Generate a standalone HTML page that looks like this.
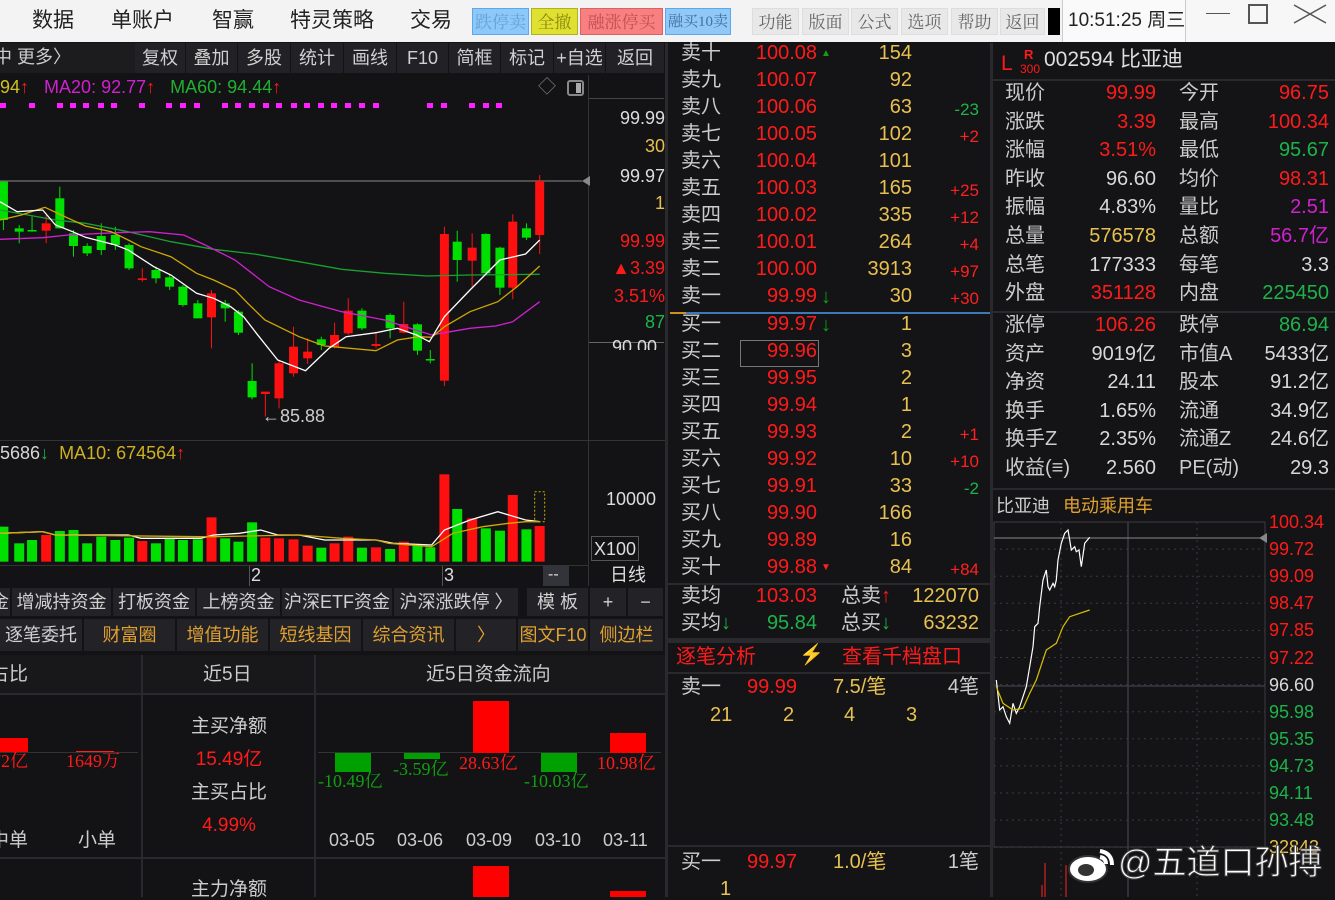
<!DOCTYPE html>
<html><head><meta charset="utf-8">
<style>
*{margin:0;padding:0;box-sizing:border-box}
body{width:1335px;height:897px;overflow:hidden;background:#131315;font-family:"Liberation Sans","Noto Sans CJK SC",sans-serif;position:relative;color:#ccc}
.a{position:absolute;white-space:nowrap;line-height:1}
.r{text-align:right}
.c{text-align:center}
.red{color:#ff1a1a}.grn{color:#1db34a}.yel{color:#e8c050}.wht{color:#d8d8d8}.mag{color:#d020d0}.org{color:#e0a030}
.tb{position:absolute;top:43px;height:30px;background:#222226;border-right:1px solid #131315;color:#d0d0d0;font-size:18px;line-height:30px;text-align:center}
.mb{position:absolute;top:8px;height:27px;font-family:"Liberation Serif","Noto Serif CJK SC",serif;font-size:17px;line-height:27px;text-align:center;color:#666;background:#e8e8e8;border:1px solid #ddd;overflow:hidden}
.t1{position:absolute;top:588px;height:28px;background:#232327;color:#d0d0d0;font-size:18px;line-height:28px;text-align:center;border-right:2px solid #131315}
.t2{position:absolute;top:619px;height:32px;background:#232327;color:#e0a030;font-size:18px;line-height:32px;text-align:center;border-right:2px solid #131315}
.ob{font-size:20px}
</style></head><body>

<div class="a" style="left:0;top:0;width:1335px;height:42px;background:#f3f3f3"></div>
<div class="a" style="left:1105px;top:0;width:230px;height:42px;background:#f7f7f7"></div>
<div class="a" style="left:32px;top:10px;font-size:21px;color:#222">数据</div>
<div class="a" style="left:111px;top:10px;font-size:21px;color:#222">单账户</div>
<div class="a" style="left:212px;top:10px;font-size:21px;color:#222">智赢</div>
<div class="a" style="left:290px;top:10px;font-size:21px;color:#222">特灵策略</div>
<div class="a" style="left:410px;top:10px;font-size:21px;color:#222">交易</div>
<div class="mb" style="left:472px;width:57px;background:#8cc8f8;color:#6aa0d8;border-color:#5aa8f0">跌停卖</div>
<div class="mb" style="left:531px;width:47px;background:#e0e030;color:#8a8a10;border-color:#b0b020">全撤</div>
<div class="mb" style="left:580px;width:83px;background:#f88080;color:#c05050;border-color:#e06060">融涨停买</div>
<div class="mb" style="left:665px;width:66px;background:#90c8f8;color:#4070a0;border-color:#5aa8f0;font-size:15px">融买10卖</div>
<div class="mb" style="left:752px;width:47px">功能</div>
<div class="mb" style="left:802px;width:47px">版面</div>
<div class="mb" style="left:851px;width:47px">公式</div>
<div class="mb" style="left:901px;width:47px">选项</div>
<div class="mb" style="left:951px;width:47px">帮助</div>
<div class="mb" style="left:1000px;width:45px">返回</div>
<div class="a" style="left:1048px;top:8px;width:12px;height:27px;background:#000"></div>
<div class="a" style="left:1062px;top:0;width:124px;height:42px;border-left:1px solid #ccc;border-right:1px solid #ccc;background:#fafafa"></div>
<div class="a" style="left:1068px;top:11px;font-size:19px;color:#222">10:51:25 周三</div>
<div class="a" style="left:1206px;top:13px;width:24px;height:1px;background:#555"></div>
<div class="a" style="left:1248px;top:4px;width:20px;height:20px;border:2px solid #555"></div>
<svg class="a" style="left:1292px;top:3px" width="36" height="22"><path d="M2 2L34 20M34 2L2 20" stroke="#555" stroke-width="1.5"/></svg>

<div class="a" style="left:0;top:43px;width:665px;height:30px;background:#1c1c1e"></div>
<div class="a" style="left:-6px;top:48px;font-size:18px;color:#ccc">中 更多〉</div>
<div class="tb" style="left:135px;width:51px">复权</div>
<div class="tb" style="left:186px;width:52px">叠加</div>
<div class="tb" style="left:238px;width:53px">多股</div>
<div class="tb" style="left:291px;width:53px">统计</div>
<div class="tb" style="left:344px;width:53px">画线</div>
<div class="tb" style="left:397px;width:52px">F10</div>
<div class="tb" style="left:449px;width:52px">简框</div>
<div class="tb" style="left:501px;width:53px">标记</div>
<div class="tb" style="left:554px;width:52px">+自选</div>
<div class="tb" style="left:606px;width:59px">返回</div>

<div class="a" style="left:0;top:78px;font-size:18px"><span style="color:#d0c020">94</span><span class="red">↑</span> <span class="mag">&nbsp;&nbsp;MA20: 92.77</span><span class="red">↑</span> <span style="color:#20b030">&nbsp;&nbsp;MA60: 94.44</span><span class="red">↑</span></div>
<div class="a" style="left:538px;top:78px;font-size:18px;color:#777">◇</div>
<div class="a" style="left:567px;top:80px;width:17px;height:16px;border:2px solid #888;border-radius:3px"><div style="position:absolute;right:1px;top:1px;width:5px;height:10px;background:#aaa"></div></div>
<svg class="a" style="left:0;top:103px" width="520" height="8" fill="#ff20ff">
<g id="d"><rect x="0" y="0" width="6" height="5"/></g>
<use href="#d" x="0"/><use href="#d" x="29"/><use href="#d" x="57"/><use href="#d" x="70"/><use href="#d" x="83"/><use href="#d" x="98"/><use href="#d" x="111"/><use href="#d" x="139"/><use href="#d" x="166"/><use href="#d" x="180"/><use href="#d" x="194"/><use href="#d" x="222"/><use href="#d" x="235"/><use href="#d" x="249"/><use href="#d" x="263"/><use href="#d" x="276"/><use href="#d" x="291"/><use href="#d" x="304"/><use href="#d" x="318"/><use href="#d" x="331"/><use href="#d" x="345"/><use href="#d" x="359"/><use href="#d" x="373"/><use href="#d" x="427"/><use href="#d" x="441"/><use href="#d" x="469"/><use href="#d" x="483"/><use href="#d" x="496"/>
</svg>

<div class="a" style="left:588px;top:75px;width:1px;height:513px;background:#333"></div>
<div class="a" style="left:665px;top:43px;width:3px;height:854px;background:#2a2a2e"></div>
<div class="a" style="left:589px;top:98px;width:75px;height:1px;background:#444"></div>
<div class="a" style="left:589px;top:342px;width:75px;height:1px;background:#666"></div>
<div class="a r" style="left:590px;top:109px;width:75px;font-size:18px;color:#ddd">99.99</div>
<div class="a r" style="left:590px;top:137px;width:75px;font-size:18px" ><span class="yel">30</span></div>
<div class="a r" style="left:590px;top:167px;width:75px;font-size:18px;color:#ddd">99.97</div>
<div class="a r" style="left:590px;top:194px;width:75px;font-size:18px"><span class="yel">1</span></div>
<div class="a r red" style="left:590px;top:232px;width:75px;font-size:18px">99.99</div>
<div class="a r red" style="left:590px;top:259px;width:75px;font-size:18px">▲3.39</div>
<div class="a r red" style="left:590px;top:287px;width:75px;font-size:18px">3.51%</div>
<div class="a r grn" style="left:590px;top:313px;width:75px;font-size:18px">87</div>
<div class="a" style="left:612px;top:338px;font-size:18px;color:#ddd;height:12px;overflow:hidden">90.00</div>
<div class="a" style="left:589px;top:440px;width:76px;height:1px;background:#333"></div>
<div class="a" style="left:0;top:440px;width:588px;height:1px;background:#333"></div>
<div class="a" style="left:606px;top:490px;font-size:18px;color:#ddd">10000</div>
<div class="a" style="left:591px;top:536px;width:48px;height:25px;border:1px solid #555;font-size:18px;color:#ddd;padding:3px 2px">X100</div>
<div class="a" style="left:610px;top:566px;font-size:18px;color:#ddd">日线</div>
<div class="a" style="left:0;top:565px;width:588px;height:1px;background:#333"></div>
<div class="a" style="left:543px;top:565px;width:26px;height:22px;background:#33333a;color:#ddd;font-size:16px;padding:2px 5px">--</div>
<div class="a" style="left:251px;top:566px;font-size:18px;color:#ddd">2</div>
<div class="a" style="left:444px;top:566px;font-size:18px;color:#ddd">3</div>
<div class="a" style="left:249px;top:566px;width:1px;height:20px;background:#555"></div>
<div class="a" style="left:442px;top:566px;width:1px;height:20px;background:#555"></div>

<svg class="a" style="left:0;top:0" width="665" height="588">
<line x1="0" y1="181" x2="582" y2="181" stroke="#888" stroke-width="1"/>
<polygon points="582,181 590,176 590,186" fill="#888"/>
</svg>
<svg class="a" style="left:0;top:0" width="665" height="588" id="ks"></svg>
<div class="a" style="left:262px;top:407px;font-size:18px;color:#ccc">←85.88</div>

<div class="a" style="left:0;top:444px;font-size:18px"><span class="wht">5686</span><span class="grn">↓</span> <span style="color:#d0b020">&nbsp;MA10: 674564</span><span class="red">↑</span></div>

<div class="a" style="left:0;top:586px;width:665px;height:68px;background:#131315"></div>
<div class="t1" style="left:-10px;width:22px">金</div>
<div class="t1" style="left:12px;width:101px">增减持资金</div>
<div class="t1" style="left:113px;width:84px">打板资金</div>
<div class="t1" style="left:197px;width:85px">上榜资金</div>
<div class="t1" style="left:282px;width:112px">沪深ETF资金</div>
<div class="t1" style="left:394px;width:126px">沪深涨跌停 〉</div>
<div class="t1" style="left:527px;width:63px">模 板</div>
<div class="t1" style="left:590px;width:38px">+</div>
<div class="t1" style="left:628px;width:37px">−</div>
<div class="t2" style="left:0;width:84px;color:#d0d0d0">逐笔委托</div>
<div class="t2" style="left:84px;width:93px">财富圈</div>
<div class="t2" style="left:177px;width:93px">增值功能</div>
<div class="t2" style="left:270px;width:93px">短线基因</div>
<div class="t2" style="left:363px;width:93px">综合资讯</div>
<div class="t2" style="left:456px;width:62px">〉</div>
<div class="t2" style="left:518px;width:72px">图文F10</div>
<div class="t2" style="left:590px;width:75px">侧边栏</div>

<div class="a" style="left:0;top:655px;width:665px;height:39px;background:#18181a"></div>
<div class="a" style="left:0;top:693px;width:665px;height:2px;background:#2a2a2e"></div>
<div class="a" style="left:0;top:857px;width:665px;height:2px;background:#2a2a2e"></div>
<div class="a" style="left:141px;top:655px;width:2px;height:242px;background:#2a2a2e"></div>
<div class="a" style="left:314px;top:655px;width:2px;height:242px;background:#2a2a2e"></div>
<div class="a" style="left:-10px;top:665px;font-size:19px;color:#ccc">占比</div>
<div class="a" style="left:203px;top:665px;font-size:19px;color:#ccc">近5日</div>
<div class="a" style="left:426px;top:665px;font-size:19px;color:#ccc">近5日资金流向</div>
<div class="a" style="left:0;top:738px;width:28px;height:15px;background:#ff0000"></div>
<div class="a" style="left:0;top:752px;width:138px;height:1px;background:#333"></div>
<div class="a" style="left:76px;top:751px;width:38px;height:1px;background:#ff2020"></div>
<div class="a red" style="left:-8px;top:752px;font-size:18px;font-family:'Liberation Serif','Noto Serif CJK SC',serif">72亿</div>
<div class="a red" style="left:66px;top:752px;font-size:18px;font-family:'Liberation Serif','Noto Serif CJK SC',serif">1649万</div>
<div class="a" style="left:-10px;top:831px;font-size:19px;color:#ccc">中单</div>
<div class="a" style="left:78px;top:831px;font-size:19px;color:#ccc">小单</div>
<div class="a c" style="left:143px;top:717px;width:172px;font-size:19px;color:#ccc">主买净额</div>
<div class="a c red" style="left:143px;top:750px;width:172px;font-size:19px">15.49亿</div>
<div class="a c" style="left:143px;top:783px;width:172px;font-size:19px;color:#ccc">主买占比</div>
<div class="a c red" style="left:143px;top:816px;width:172px;font-size:19px">4.99%</div>
<div class="a c" style="left:143px;top:880px;width:172px;font-size:19px;color:#ccc">主力净额</div>
<div class="a" style="left:318px;top:752px;width:343px;height:1px;background:#333"></div>
<div class="a" style="left:335px;top:753px;width:36px;height:19px;background:#00a000"></div>
<div class="a" style="left:404px;top:753px;width:36px;height:6px;background:#00a000"></div>
<div class="a" style="left:473px;top:701px;width:36px;height:52px;background:#ff0000"></div>
<div class="a" style="left:541px;top:753px;width:36px;height:19px;background:#00a000"></div>
<div class="a" style="left:610px;top:733px;width:36px;height:20px;background:#ff0000"></div>
<div class="a" style="left:318px;top:772px;font-size:18px;font-family:'Liberation Serif','Noto Serif CJK SC',serif;color:#10a010">-10.49亿</div>
<div class="a" style="left:393px;top:760px;font-size:18px;font-family:'Liberation Serif','Noto Serif CJK SC',serif;color:#10a010">-3.59亿</div>
<div class="a red" style="left:459px;top:754px;font-size:18px;font-family:'Liberation Serif','Noto Serif CJK SC',serif">28.63亿</div>
<div class="a" style="left:524px;top:772px;font-size:18px;font-family:'Liberation Serif','Noto Serif CJK SC',serif;color:#10a010">-10.03亿</div>
<div class="a red" style="left:597px;top:754px;font-size:18px;font-family:'Liberation Serif','Noto Serif CJK SC',serif">10.98亿</div>
<div class="a" style="left:329px;top:831px;font-size:18px;color:#ccc">03-05</div>
<div class="a" style="left:397px;top:831px;font-size:18px;color:#ccc">03-06</div>
<div class="a" style="left:466px;top:831px;font-size:18px;color:#ccc">03-09</div>
<div class="a" style="left:535px;top:831px;font-size:18px;color:#ccc">03-10</div>
<div class="a" style="left:603px;top:831px;font-size:18px;color:#ccc">03-11</div>
<div class="a" style="left:473px;top:866px;width:36px;height:31px;background:#ff0000"></div>
<div class="a" style="left:610px;top:891px;width:36px;height:6px;background:#ff0000"></div>

<div class="a" style="left:668px;top:43px;width:322px;height:854px;background:#141416"></div>
<div class="a" style="left:990px;top:43px;width:3px;height:854px;background:#2a2a2e"></div>
<div id="ob"></div>
<div class="a" style="left:670px;top:312px;width:320px;height:2px;background:#3a7ab8"></div>
<div class="a" style="left:670px;top:312px;width:16px;height:2px;background:#d09020"></div>
<div class="a" style="left:740px;top:340px;width:79px;height:27px;border:1px solid #777"></div>
<div class="a" style="left:668px;top:583px;width:322px;height:2px;background:#2a2a2e"></div>
<div class="a" style="left:668px;top:638px;width:322px;height:5px;background:#2a2a2e"></div>
<div class="a" style="left:668px;top:672px;width:322px;height:2px;background:#2a2a2e"></div>
<div class="a" style="left:668px;top:845px;width:322px;height:2px;background:#2a2a2e"></div>
<div class="a ob" style="left:681px;top:586px;color:#ccc">卖均</div>
<div class="a ob r red" style="left:740px;top:586px;width:77px">103.03</div>
<div class="a ob" style="left:841px;top:586px;color:#ccc">总卖<b class="red">↑</b></div>
<div class="a ob r yel" style="left:880px;top:586px;width:99px">122070</div>
<div class="a ob" style="left:681px;top:613px;color:#ccc">买均<b class="grn">↓</b></div>
<div class="a ob r grn" style="left:740px;top:613px;width:77px">95.84</div>
<div class="a ob" style="left:841px;top:613px;color:#ccc">总买<b class="grn">↓</b></div>
<div class="a ob r yel" style="left:880px;top:613px;width:99px">63232</div>
<div class="a ob red" style="left:676px;top:647px">逐笔分析</div>
<div class="a" style="left:799px;top:645px;font-size:20px;color:#8a7a30">⚡</div>
<div class="a ob red" style="left:842px;top:647px">查看千档盘口</div>
<div class="a ob" style="left:681px;top:677px;color:#ccc">卖一</div>
<div class="a ob red" style="left:747px;top:677px">99.99</div>
<div class="a ob yel" style="left:833px;top:677px">7.5/笔</div>
<div class="a ob r" style="left:920px;top:677px;width:59px;color:#ccc">4笔</div>
<div class="a ob yel" style="left:710px;top:705px">21</div>
<div class="a ob yel" style="left:783px;top:705px">2</div>
<div class="a ob yel" style="left:844px;top:705px">4</div>
<div class="a ob yel" style="left:906px;top:705px">3</div>
<div class="a ob" style="left:681px;top:852px;color:#ccc">买一</div>
<div class="a ob red" style="left:747px;top:852px">99.97</div>
<div class="a ob yel" style="left:833px;top:852px">1.0/笔</div>
<div class="a ob r" style="left:920px;top:852px;width:59px;color:#ccc">1笔</div>
<div class="a ob yel" style="left:720px;top:879px">1</div>

<div class="a" style="left:993px;top:43px;width:342px;height:854px;background:#141416"></div>
<div class="a red" style="left:1001px;top:53px;font-size:21px">L</div>
<div class="a red" style="left:1024px;top:48px;font-size:13px;font-weight:bold">R</div>
<div class="a red" style="left:1020px;top:63px;font-size:12px">300</div>
<div class="a" style="left:1044px;top:49px;font-size:21px;color:#ddd">002594 比亚迪</div>
<div class="a" style="left:993px;top:79px;width:342px;height:2px;background:#2a2a2e"></div>
<div class="a" style="left:993px;top:311px;width:342px;height:2px;background:#2a2a2e"></div>
<div id="qp"></div>
<div class="a" style="left:993px;top:488px;width:342px;height:2px;background:#2a2a2e"></div>
<div class="a" style="left:996px;top:497px;font-size:18px;color:#ccc">比亚迪</div>
<div class="a org" style="left:1063px;top:497px;font-size:18px">电动乘用车</div>
<svg class="a" style="left:993px;top:515px" width="342" height="382" id="ic"></svg>
<div id="ia"></div>

<svg class="a" style="left:1066px;top:845px" width="52" height="40">
<ellipse cx="22" cy="24" rx="19" ry="13" fill="#fff" stroke="#333" stroke-width="2"/>
<ellipse cx="20" cy="25" rx="8" ry="6" fill="#333"/>
<path d="M34 6 Q46 8 46 20 M34 12 Q40 13 40 19" stroke="#fff" stroke-width="4" fill="none"/>
</svg>
<div class="a" style="left:1118px;top:846px;font-size:34px;color:#fff;-webkit-text-stroke:1px #444">@五道口孙搏</div>

<script>
var C=[[8,65,180,65,210,'g'],[45,205,215,195,250,'g'],[75,210,214,170,215,'g'],[108,190,212,165,250,'r'],[140,115,205,80,205,'g'],[172,220,258,210,290,'g'],[204,258,280,250,288,'g'],[237,228,270,190,285,'g'],[270,225,255,200,270,'g'],[302,255,325,250,330,'g'],[333,355,360,325,365,'r'],[365,330,355,320,370,'g'],[397,352,380,345,390,'g'],[428,380,435,375,440,'g'],[463,430,475,420,475,'g'],[495,400,472,390,565,'r'],[527,430,445,420,485,'g'],[558,455,518,450,525,'g'],[590,663,712,610,718,'g'],[621,695,702,695,770,'r'],[653,610,715,600,745,'r'],[687,560,640,500,650,'r'],[720,575,595,535,612,'r'],[752,538,555,530,570,'g'],[783,525,560,488,565,'r'],[815,452,520,415,525,'r'],[847,452,505,445,510,'g'],[880,552,558,515,565,'r'],[913,465,505,460,535,'g'],[945,492,518,425,520,'r'],[977,493,572,490,585,'g'],[1007,597,600,570,610,'g'],[1040,222,662,200,678,'r'],[1070,245,300,212,365,'g'],[1105,263,302,220,380,'r'],[1137,222,340,220,345,'g'],[1170,263,383,260,405,'g'],[1200,185,383,163,418,'r'],[1232,205,233,190,240,'g'],[1263,63,225,45,282,'r']];
var V=[1100,1150,1140,1125,1113,1110,1150,1130,1140,1133,1143,1150,1133,1140,1138,1072,1135,1145,1087,1133,1135,1138,1157,1163,1150,1130,1163,1162,1167,1145,1155,1162,943,1047,1075,1105,1112,1005,1108,1098];
var sx=0.4273,sy=1/3;
function X(z){return (z*sx).toFixed(1)}function Y(z){return (160+z*sy).toFixed(1)}
var s='';
function pl(pts,col){var p=[];for(var i=0;i<pts.length;i+=2)p.push(X(pts[i])+','+Y(pts[i+1]));return '<polyline points="'+p.join(' ')+'" fill="none" stroke="'+col+'" stroke-width="1.3"/>';}
C.forEach(function(c,i){var col=c[5]=='g'?'#00e000':'#ff1010';var x=c[0]*sx;
s+='<line x1="'+x+'" x2="'+x+'" y1="'+Y(c[3])+'" y2="'+Y(c[4])+'" stroke="'+col+'"/>';
var t=160+c[1]*sy,b=160+c[2]*sy;s+='<rect x="'+(x-4.5)+'" y="'+t+'" width="9" height="'+Math.max(1.5,b-t)+'" fill="'+col+'"/>';
var vt=160+V[i]*sy,vb=160+1205*sy;s+='<rect x="'+(x-5)+'" y="'+vt+'" width="10" height="'+(vb-vt)+'" fill="'+col+'"/>';});
s+=pl([0,150,130,180,200,190,300,215,400,245,500,268,600,283,700,305,800,328,900,340,1000,348,1100,345,1263,343],'#18a030');
s+=pl([0,238,100,233,160,225,270,218,350,215,430,225,480,255,550,300,630,380,700,420,800,455,900,480,960,505,1010,525,1040,518,1100,505,1160,498,1200,485,1263,425],'#d020d0');
s+=pl([0,180,50,165,105,142,160,175,200,198,260,215,300,240,330,260,400,290,460,340,500,360,550,390,580,430,620,480,700,530,760,558,880,572,930,540,980,530,1010,532,1040,500,1100,455,1165,425,1210,380,1263,318],'#d0a800');
s+=pl([0,125,40,155,100,150,130,195,170,215,200,232,270,255,300,270,360,320,400,345,460,400,500,415,540,440,570,470,600,520,650,600,715,632,770,565,810,530,880,518,930,505,975,525,1005,545,1040,470,1100,390,1170,300,1230,282,1263,240],'#ffffff');
s+=pl([0,1120,100,1115,130,1125,300,1125,330,1135,470,1135,500,1125,560,1120,610,1110,650,1125,700,1125,760,1140,880,1140,920,1150,1010,1155,1040,1110,1100,1080,1165,1055,1230,1080,1263,1085],'#ffffff');
s+=pl([0,1120,100,1115,130,1125,470,1130,500,1130,700,1125,800,1135,880,1140,910,1150,1010,1160,1060,1120,1130,1100,1190,1090,1230,1085,1263,1085],'#d0a800');
s+='<rect x="'+(1263*sx-5)+'" y="'+Y(995)+'" width="10" height="'+(90*sy)+'" fill="none" stroke="#d0a800" stroke-dasharray="2,2"/>';
document.getElementById('ks').innerHTML=s;

var ob='';var S=[['卖十','100.08','154',''],['卖九','100.07','92',''],['卖八','100.06','63','-23'],['卖七','100.05','102','+2'],['卖六','100.04','101',''],['卖五','100.03','165','+25'],['卖四','100.02','335','+12'],['卖三','100.01','264','+4'],['卖二','100.00','3913','+97'],['卖一','99.99','30','+30'],
['买一','99.97','1',''],['买二','99.96','3',''],['买三','99.95','2',''],['买四','99.94','1',''],['买五','99.93','2','+1'],['买六','99.92','10','+10'],['买七','99.91','33','-2'],['买八','99.90','166',''],['买九','99.89','16',''],['买十','99.88','84','+84']];
S.forEach(function(r,i){var y=i<10?43+i*27:314+(i-10)*27;
ob+='<div class="a ob" style="left:681px;top:'+y+'px;color:#ccc">'+r[0]+'</div>';
ob+='<div class="a ob r red" style="left:740px;top:'+y+'px;width:77px">'+r[1]+'</div>';
var ic='';if(i==0)ic='▲';if(i==9||i==10)ic='↓';if(i==19)ic='▼';
if(ic)ob+='<div class="a" style="left:821px;top:'+(y+(ic=='↓'?1:6))+'px;font-weight:bold;font-size:'+(ic=='↓'?20:10)+'px;color:'+(i==19?'#ff2020':'#10a010')+'">'+ic+'</div>';
ob+='<div class="a ob r yel" style="left:850px;top:'+y+'px;width:62px">'+r[2]+'</div>';
if(r[3])ob+='<div class="a r" style="left:930px;top:'+(y+4)+'px;width:49px;font-size:17px;color:'+(r[3][0]=='-'?'#1db34a':'#ff2020')+'">'+r[3]+'</div>';});
document.getElementById('ob').innerHTML=ob;

var Q=[['现价','99.99','red','今开','96.75','red'],['涨跌','3.39','red','最高','100.34','red'],['涨幅','3.51%','red','最低','95.67','grn'],['昨收','96.60','wht','均价','98.31','red'],['振幅','4.83%','wht','量比','2.51','mag'],['总量','576578','yel','总额','56.7亿','mag'],['总笔','177333','wht','每笔','3.3','wht'],['外盘','351128','red','内盘','225450','grn'],
['涨停','106.26','red','跌停','86.94','grn'],['资产','9019亿','wht','市值A','5433亿','wht'],['净资','24.11','wht','股本','91.2亿','wht'],['换手','1.65%','wht','流通','34.9亿','wht'],['换手Z','2.35%','wht','流通Z','24.6亿','wht'],['收益(≡)','2.560','wht','PE(动)','29.3','wht']];
var q='';Q.forEach(function(r,i){var y=i<8?83+i*28.6:315+(i-8)*28.6;y=Math.round(y);
q+='<div class="a" style="left:1005px;top:'+y+'px;font-size:20px;color:#ccc">'+r[0]+'</div>';
q+='<div class="a r '+r[2]+'" style="left:1060px;top:'+y+'px;width:96px;font-size:20px">'+r[1]+'</div>';
q+='<div class="a" style="left:1179px;top:'+y+'px;font-size:20px;color:#ccc">'+r[3]+'</div>';
q+='<div class="a r '+r[5]+'" style="left:1230px;top:'+y+'px;width:99px;font-size:20px">'+r[4]+'</div>';});
document.getElementById('qp').innerHTML=q;

var ic='';
for(var k=0;k<13;k++){var yy=7+k*27.1;ic+='<line x1="1" x2="272" y1="'+yy+'" y2="'+yy+'" stroke="#3a3a44" stroke-dasharray="2,4"/>';}
ic+='<rect x="1" y="7" width="271" height="325" fill="none" stroke="#3a3a44"/>';
ic+='<line x1="1" x2="272" y1="171" y2="171" stroke="#3a3a44" stroke-width="1.5"/>';
ic+='<line x1="135" x2="135" y1="7" y2="382" stroke="#3a3a44" stroke-width="1.5"/>';
ic+='<line x1="68" x2="68" y1="7" y2="382" stroke="#3a3a44" stroke-dasharray="2,4"/>';
ic+='<line x1="204" x2="204" y1="7" y2="382" stroke="#3a3a44" stroke-dasharray="2,4"/>';
ic+='<line x1="1" x2="268" y1="23" y2="23" stroke="#888"/><polygon points="266,23 274,18 274,28" fill="#888"/>';
function ip(pts,col){var p=[];for(var i=0;i<pts.length;i+=2)p.push((pts[i]/3).toFixed(1)+','+(pts[i+1]/3-35).toFixed(1));return '<polyline points="'+p.join(' ')+'" fill="none" stroke="'+col+'" stroke-width="1.2"/>';}
ic+=ip([10,600,20,690,30,680,40,710,50,730,60,670,70,700,80,680,90,650,100,620,110,560,120,500,125,440,135,430,140,380,150,300,160,270,165,320,170,330,180,310,185,320,190,300,195,240,205,190,215,160,225,150,230,180,235,210,245,200,250,215,258,210,265,260,275,190,290,172],'#ffffff');
ic+=ip([10,620,30,670,60,690,90,685,110,640,130,600,160,510,190,490,210,440,230,410,260,400,290,390],'#d8c000');
ic+='<line x1="52" x2="52" y1="348" y2="382" stroke="#ff2020"/><line x1="49" x2="49" y1="370" y2="382" stroke="#ff2020"/><line x1="73" x2="73" y1="350" y2="382" stroke="#ff2020"/>';
document.getElementById('ic').innerHTML=ic;
var L=[['100.34','red'],['99.72','red'],['99.09','red'],['98.47','red'],['97.85','red'],['97.22','red'],['96.60','wht'],['95.98','grn'],['95.35','grn'],['94.73','grn'],['94.11','grn'],['93.48','grn'],['32843','yel']];
var ia='';L.forEach(function(l,i){ia+='<div class="a '+l[1]+'" style="left:1269px;top:'+Math.round(513+i*27.1)+'px;font-size:18px">'+l[0]+'</div>';});
document.getElementById('ia').innerHTML=ia;
</script>
</body></html>
